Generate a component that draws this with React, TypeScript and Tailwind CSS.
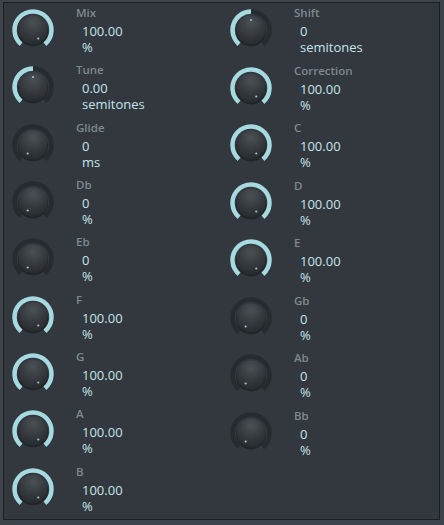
import React from "react";

type Param = { label: string; value: string; unit: string; pos: number };

const leftParams: Param[] = [
  { label: "Mix", value: "100.00", unit: "%", pos: 1 },
  { label: "Tune", value: "0.00", unit: "semitones", pos: 0.5 },
  { label: "Glide", value: "0", unit: "ms", pos: 0 },
  { label: "Db", value: "0", unit: "%", pos: 0 },
  { label: "Eb", value: "0", unit: "%", pos: 0 },
  { label: "F", value: "100.00", unit: "%", pos: 1 },
  { label: "G", value: "100.00", unit: "%", pos: 1 },
  { label: "A", value: "100.00", unit: "%", pos: 1 },
  { label: "B", value: "100.00", unit: "%", pos: 1 },
];

const rightParams: Param[] = [
  { label: "Shift", value: "0", unit: "semitones", pos: 0.5 },
  { label: "Correction", value: "100.00", unit: "%", pos: 1 },
  { label: "C", value: "100.00", unit: "%", pos: 1 },
  { label: "D", value: "100.00", unit: "%", pos: 1 },
  { label: "E", value: "100.00", unit: "%", pos: 1 },
  { label: "Gb", value: "0", unit: "%", pos: 0 },
  { label: "Ab", value: "0", unit: "%", pos: 0 },
  { label: "Bb", value: "0", unit: "%", pos: 0 },
];

const START = -140;
const END = 140;

function polar(cx: number, cy: number, r: number, deg: number) {
  const rad = (deg * Math.PI) / 180;
  return { x: cx + r * Math.sin(rad), y: cy - r * Math.cos(rad) };
}

function arc(cx: number, cy: number, r: number, from: number, to: number) {
  const a = polar(cx, cy, r, from);
  const b = polar(cx, cy, r, to);
  const large = to - from > 180 ? 1 : 0;
  return `M ${a.x} ${a.y} A ${r} ${r} 0 ${large} 1 ${b.x} ${b.y}`;
}

function Knob({ pos, id }: { pos: number; id: string }) {
  const angle = START + (END - START) * pos;
  // pointer dot sits a little past the arc ends
  const dotAngle = angle + (pos === 1 ? 8 : pos === 0 ? -8 : 0);
  const dot = polar(22, 22, 10, dotAngle);
  return (
    <svg width="44" height="44" viewBox="0 0 44 44" className="block">
      <defs>
        <radialGradient id={`kg-${id}`} cx="50%" cy="25%" r="80%">
          <stop offset="0%" stopColor="#4b5055" />
          <stop offset="60%" stopColor="#33373b" />
          <stop offset="100%" stopColor="#25282b" />
        </radialGradient>
      </defs>
      <path d={arc(22, 22, 18.5, START, END)} fill="none" stroke="#272b2f" strokeWidth="4.5" />
      {pos > 0 && (
        <path d={arc(22, 22, 18.5, START, angle)} fill="none" stroke="#a6d9e0" strokeWidth="4.5" />
      )}
      <circle cx="22" cy="23.5" r="15" fill="#1d2023" opacity="0.8" />
      <circle cx="22" cy="22" r="14.5" fill={`url(#kg-${id})`} />
      <circle cx={dot.x} cy={dot.y} r="1.1" fill="#9fc6cf" />
    </svg>
  );
}

function Row({ p, id }: { p: Param; id: string }) {
  return (
    <div className="flex h-[57.5px]">
      <div className="w-[72px] shrink-0 pl-[7px] pt-[5px]">
        <Knob pos={p.pos} id={id} />
      </div>
      <div className="flex flex-col pt-[2px]">
        <div className="text-[11.5px] font-semibold leading-[15px] text-[#7e8990]">{p.label}</div>
        <div className="mt-[3px] pl-[6px] text-[13px] leading-[16px] text-[#c4e4ec]">{p.value}</div>
        <div className="pl-[6px] text-[13px] leading-[16px] text-[#c4e4ec]">{p.unit}</div>
      </div>
    </div>
  );
}

export default function App() {
  return (
    <div
      className="h-[525px] w-[444px] bg-[#3c434a] pl-[3px] pt-[2px]"
      style={{ fontFamily: '"Open Sans", "Noto Sans", sans-serif' }}
    >
      <div className="flex h-[518px] w-[437px] border border-[#1b1f22] bg-[#32383d]">
        <div className="flex w-[218px] flex-col">
          {leftParams.map((p, i) => (
            <Row key={p.label} p={p} id={`l${i}`} />
          ))}
        </div>
        <div className="flex flex-1 flex-col">
          {rightParams.map((p, i) => (
            <Row key={p.label} p={p} id={`r${i}`} />
          ))}
        </div>
      </div>
    </div>
  );
}
